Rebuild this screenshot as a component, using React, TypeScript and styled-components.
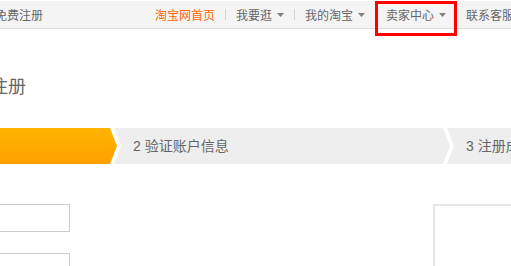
import React from "react";
import styled, { createGlobalStyle, css } from "styled-components";

const GlobalStyle = createGlobalStyle`
  html, body {
    margin: 0;
    padding: 0;
    background: #fff;
    overflow: hidden;
  }
  body {
    font-family: "Liberation Sans", "Noto Sans CJK SC", sans-serif;
    color: #666;
  }
`;

const TopBar = styled.div`
  height: 27px;
  background: #f4f4f4;
  border-top: 1px solid #fff;
  border-bottom: 1px solid #ddd;
`;

const TopInner = styled.div`
  display: flex;
  align-items: center;
  height: 100%;
  margin-left: -157px;
  font-size: 12px;
  font-family: "Noto Sans CJK SC", sans-serif;
  white-space: nowrap;
`;

const LeftGroup = styled.div`
  display: flex;
  gap: 10px;
  color: #666;
`;

const RightGroup = styled.ul`
  display: flex;
  align-items: center;
  list-style: none;
  margin: 0 0 0 102px;
  padding: 0;
`;

const NavItem = styled.li<{ $hot?: boolean; $marked?: boolean }>`
  position: relative;
  display: flex;
  align-items: center;
  gap: 5px;
  padding: 0 10px;
  height: 27px;
  color: ${(p) => (p.$hot ? "#f60" : "#666")};

  ${(p) =>
    p.$marked &&
    css`
      &::after {
        content: "";
        position: absolute;
        left: -1px;
        right: -1px;
        top: 0;
        height: 35px;
        border: 3px solid #f00;
        box-sizing: border-box;
        z-index: 2;
      }
    `}
`;

const Sep = styled.li<{ $hidden?: boolean }>`
  width: 1px;
  height: 11px;
  background: ${(p) => (p.$hidden ? "transparent" : "#d5d5d5")};
`;

const Caret = () => (
  <svg width="7" height="4" viewBox="0 0 7 4">
    <path d="M0 0h7L3.5 4z" fill="#808080" />
  </svg>
);

const Main = styled.div`
  width: 999px;
  margin-left: -219px;
`;

const Header = styled.div`
  display: flex;
  align-items: center;
  height: 56px;
  margin-top: 28px;
`;

const Logo = styled.div`
  width: 160px;
  font-size: 28px;
  font-weight: bold;
  color: #f40;
  font-family: "Noto Sans CJK SC", sans-serif;
`;

const Title = styled.h1`
  margin: 0 0 0 13px;
  font-size: 18px;
  line-height: 18px;
  font-weight: normal;
  color: #666;
  font-family: "Noto Sans CJK SC", sans-serif;
`;

const Steps = styled.ol`
  display: flex;
  list-style: none;
  margin: 15px 0 0;
  padding: 0;
`;

const Step = styled.li<{ $pos: "first" | "middle" | "last"; $active?: boolean }>`
  flex: 0 0 336px;
  height: 36px;
  line-height: 36px;
  margin-right: -3px;
  padding-left: 19px;
  box-sizing: border-box;
  font-size: 14px;
  color: ${(p) => (p.$active ? "#fff" : "#666")};
  background: ${(p) =>
    p.$active ? "linear-gradient(#ffb500, #ff9f00)" : "#eee"};
  clip-path: ${(p) =>
    p.$pos === "first"
      ? "polygon(0 0, 329px 0, 100% 50%, 329px 100%, 0 100%)"
      : p.$pos === "middle"
      ? "polygon(0 0, 329px 0, 100% 50%, 329px 100%, 0 100%, 7px 50%)"
      : "polygon(0 0, 100% 0, 100% 100%, 0 100%, 7px 50%)"};
`;

const Body = styled.div`
  display: flex;
  margin-top: 40px;
`;

const Form = styled.form`
  flex: 0 0 652px;
  display: flex;
  flex-direction: column;
  gap: 21px;
`;

const Row = styled.div`
  display: flex;
  align-items: center;
`;

const Label = styled.label`
  width: 130px;
  font-size: 12px;
  text-align: right;
  color: #666;
`;

const Input = styled.input`
  width: 159px;
  height: 28px;
  box-sizing: border-box;
  border: 1px solid #ccc;
  padding: 0 6px;
  outline: none;
`;

const SideBox = styled.div`
  width: 300px;
  height: 200px;
  border: 2px solid #e5e5e5;
`;

export default function App() {
  return (
    <>
      <GlobalStyle />
      <TopBar>
        <TopInner>
          <LeftGroup>
            <span>亲，欢迎来淘宝！</span>
            <span>请登录</span>
            <span>免费注册</span>
          </LeftGroup>
          <RightGroup>
            <NavItem $hot>淘宝网首页</NavItem>
            <Sep />
            <NavItem>
              我要逛 <Caret />
            </NavItem>
            <Sep />
            <NavItem>
              我的淘宝 <Caret />
            </NavItem>
            <Sep $hidden />
            <NavItem $marked>
              卖家中心 <Caret />
            </NavItem>
            <NavItem>
              联系客服 <Caret />
            </NavItem>
            <Sep />
            <NavItem>
              网站导航 <Caret />
            </NavItem>
          </RightGroup>
        </TopInner>
      </TopBar>

      <Main>
        <Header>
          <Logo>淘宝网</Logo>
          <Title>用户注册</Title>
        </Header>

        <Steps>
          <Step $pos="first" $active>
            1 设置用户名
          </Step>
          <Step $pos="middle">2 验证账户信息</Step>
          <Step $pos="last">3 注册成功</Step>
        </Steps>

        <Body>
          <Form>
            <Row>
              <Label>登录名：</Label>
              <Input />
            </Row>
            <Row>
              <Label>登录密码：</Label>
              <Input type="password" />
            </Row>
          </Form>
          <SideBox />
        </Body>
      </Main>
    </>
  );
}
